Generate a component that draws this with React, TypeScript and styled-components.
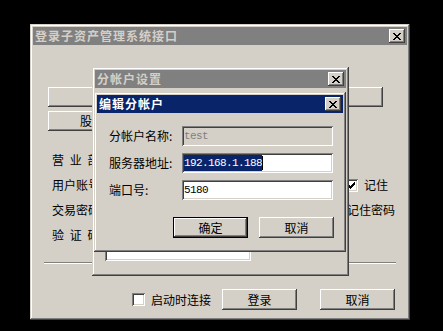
import React from 'react';
import styled, { createGlobalStyle } from 'styled-components';

const GlobalStyle = createGlobalStyle`
  html, body {
    margin: 0;
    padding: 0;
    background: #000;
  }
  body {
    font-family: "Noto Sans CJK SC", "Noto Sans", sans-serif;
    font-size: 12px;
    color: #000;
  }
`;

const FACE = '#d4d0c8';

const Desktop = styled.div`
  position: relative;
  width: 443px;
  height: 331px;
  background: #000;
  overflow: hidden;
`;

const Window = styled.div<{ $left: number; $top: number; $width: number; $height: number }>`
  position: absolute;
  left: ${p => p.$left}px;
  top: ${p => p.$top}px;
  width: ${p => p.$width}px;
  height: ${p => p.$height}px;
  box-sizing: border-box;
  padding: 3px;
  background: ${FACE};
  box-shadow: inset -1px -1px #404040, inset 1px 1px ${FACE}, inset -2px -2px #808080, inset 2px 2px #fff;
  display: flex;
  flex-direction: column;
`;

const TitleBar = styled.div<{ $active?: boolean }>`
  flex: none;
  height: 18px;
  display: flex;
  align-items: center;
  justify-content: space-between;
  padding: 0 2px;
  background: ${p => (p.$active ? '#0a246a' : '#808080')};
  color: ${p => (p.$active ? '#fff' : FACE)};
`;

const TitleText = styled.span`
  font-weight: bold;
  font-size: 12px;
  letter-spacing: 1px;
  line-height: 18px;
`;

const CloseButton = styled.div`
  width: 16px;
  height: 14px;
  box-sizing: border-box;
  display: flex;
  align-items: center;
  justify-content: center;
  background: ${FACE};
  box-shadow: inset -1px -1px #404040, inset 1px 1px #fff, inset -2px -2px #808080, inset 2px 2px ${FACE};
`;

const Body = styled.div`
  flex: 1;
  display: flex;
  flex-direction: column;
`;

const MainBody = styled(Body)`
  padding: 42px 11px 0 11px;
`;

const RaisedButton = styled.div<{ $width?: number; $height?: number; $default?: boolean }>`
  flex: none;
  width: ${p => (p.$width ? `${p.$width}px` : 'auto')};
  height: ${p => p.$height ?? 21}px;
  box-sizing: border-box;
  display: flex;
  align-items: center;
  justify-content: center;
  background: ${FACE};
  font-size: 12px;
  line-height: 1;
  border: ${p => (p.$default ? '1px solid #000' : 'none')};
  box-shadow: inset -1px -1px #404040, inset 1px 1px #fff, inset -2px -2px #808080, inset 2px 2px ${FACE};
`;

const WideButton = styled(RaisedButton)`
  margin: 0 13px 4px 4px;
`;

const TabButton = styled(RaisedButton)`
  margin-left: 4px;
`;

const Fields = styled.div`
  display: flex;
  flex-direction: column;
  gap: 5px;
  margin: 19px 0 0 8px;
`;

const FieldRow = styled.div`
  height: 20px;
  display: flex;
  align-items: center;
`;

const FieldLabel = styled.span`
  flex: none;
  width: 53px;
  white-space: pre;
  word-spacing: 3px;
  line-height: 14px;
`;

const Sunken = styled.div<{ $disabled?: boolean }>`
  height: 20px;
  box-sizing: border-box;
  display: flex;
  align-items: center;
  padding: 0 2px;
  background: ${p => (p.$disabled ? FACE : '#fff')};
  color: ${p => (p.$disabled ? '#808080' : '#000')};
  box-shadow: inset 1px 1px #808080, inset -1px -1px #fff, inset 2px 2px #404040, inset -2px -2px ${FACE};
  font-family: "Liberation Mono", monospace;
  font-size: 11px;
  letter-spacing: -0.6px;
`;

const FieldInput = styled(Sunken)<{ $width?: number }>`
  flex: ${p => (p.$width ? 'none' : '1')};
  width: ${p => (p.$width ? `${p.$width}px` : 'auto')};
  margin-right: 5px;
`;

const CheckGroup = styled.label<{ $width?: number }>`
  flex: none;
  width: ${p => (p.$width ? `${p.$width}px` : 'auto')};
  display: flex;
  align-items: center;
  gap: 6px;
  line-height: 14px;
`;

const CheckBox = styled.span`
  flex: none;
  width: 13px;
  height: 13px;
  box-sizing: border-box;
  display: flex;
  align-items: center;
  justify-content: center;
  background: #fff;
  box-shadow: inset 1px 1px #808080, inset -1px -1px #fff, inset 2px 2px #404040, inset -2px -2px ${FACE};
`;

const Separator = styled.div`
  height: 2px;
  margin-top: 17px;
  border-top: 1px solid #808080;
  border-bottom: 1px solid #fff;
  box-sizing: border-box;
`;

const ActionBar = styled.div`
  display: flex;
  justify-content: flex-end;
  align-items: center;
  margin: 25px 1px 0 0;
`;

const StartCheck = styled(CheckGroup)`
  margin-right: 11px;
`;

const ButtonGroup = styled.div<{ $gap: number }>`
  display: flex;
  gap: ${p => p.$gap}px;
`;

const MiddleBody = styled(Body)`
  justify-content: flex-end;
  padding: 0 0 12px 10px;
`;

const ListBox = styled(Sunken)`
  width: 146px;
  height: 40px;
`;

const DialogBody = styled(Body)`
  padding: 13px 9px 0 12px;
`;

const Form = styled.div`
  display: grid;
  grid-template-columns: 73px 151px;
  row-gap: 7px;
  align-items: center;
`;

const FormLabel = styled.span`
  line-height: 14px;
`;

const Selected = styled.span`
  background: #0a246a;
  color: #fff;
  padding: 1px 0;
  line-height: 14px;
`;

const Caret = styled.span`
  width: 1px;
  height: 14px;
  background: #000;
`;

const DialogButtons = styled(ButtonGroup)`
  justify-content: flex-end;
  margin-top: 17px;
`;

function CloseIcon() {
  return (
    <svg width="8" height="7" viewBox="0 0 8 7" shapeRendering="crispEdges">
      <path
        fill="#000"
        d="M0 0h2v1H0zM6 0h2v1H6zM1 1h2v1H1zM5 1h2v1H5zM2 2h4v1H2zM3 3h2v1H3zM2 4h4v1H2zM1 5h2v1H1zM5 5h2v1H5zM0 6h2v1H0zM6 6h2v1H6z"
      />
    </svg>
  );
}

function CheckMark() {
  return (
    <svg width="7" height="7" viewBox="0 0 7 7" shapeRendering="crispEdges">
      <path
        fill="#000"
        d="M6 0h1v1H6zM5 1h2v1H5zM0 2h1v1H0zM4 2h3v1H4zM0 3h2v1H0zM3 3h3v1H3zM0 4h5v1H0zM1 5h3v1H1zM2 6h1v1H2z"
      />
    </svg>
  );
}

function Title({ text, active }: { text: string; active?: boolean }) {
  return (
    <TitleBar $active={active}>
      <TitleText>{text}</TitleText>
      <CloseButton>
        <CloseIcon />
      </CloseButton>
    </TitleBar>
  );
}

export default function App() {
  return (
    <>
      <GlobalStyle />
      <Desktop>
        <Window $left={30} $top={24} $width={380} $height={296}>
          <Title text="登录子资产管理系统接口" />
          <MainBody>
            <WideButton $height={20}>期货</WideButton>
            <TabButton $width={88} $height={20}>股票</TabButton>
            <Fields>
              <FieldRow>
                <FieldLabel>营 业 部</FieldLabel>
                <FieldInput $width={200} />
              </FieldRow>
              <FieldRow>
                <FieldLabel>用户账号</FieldLabel>
                <FieldInput />
                <CheckGroup $width={51}>
                  <CheckBox>
                    <CheckMark />
                  </CheckBox>
                  记住
                </CheckGroup>
              </FieldRow>
              <FieldRow>
                <FieldLabel>交易密码</FieldLabel>
                <FieldInput />
                <CheckGroup $width={68}>
                  <CheckBox />
                  记住密码
                </CheckGroup>
              </FieldRow>
              <FieldRow>
                <FieldLabel>验 证 码</FieldLabel>
                <FieldInput $width={120} />
              </FieldRow>
            </Fields>
            <Separator />
            <ActionBar>
              <StartCheck>
                <CheckBox />
                启动时连接
              </StartCheck>
              <ButtonGroup $gap={23}>
                <RaisedButton $width={75}>登录</RaisedButton>
                <RaisedButton $width={75}>取消</RaisedButton>
              </ButtonGroup>
            </ActionBar>
          </MainBody>
        </Window>

        <Window $left={92} $top={67} $width={257} $height={209}>
          <Title text="分帐户设置" />
          <MiddleBody>
            <ListBox />
          </MiddleBody>
        </Window>

        <Window $left={94} $top={92} $width={252} $height={160}>
          <Title text="编辑分帐户" active />
          <DialogBody>
            <Form>
              <FormLabel>分帐户名称:</FormLabel>
              <Sunken $disabled>test</Sunken>
              <FormLabel>服务器地址:</FormLabel>
              <Sunken>
                <Selected>192.168.1.188</Selected>
                <Caret />
              </Sunken>
              <FormLabel>端口号:</FormLabel>
              <Sunken>5180</Sunken>
            </Form>
            <DialogButtons $gap={11}>
              <RaisedButton $width={75} $default>确定</RaisedButton>
              <RaisedButton $width={75}>取消</RaisedButton>
            </DialogButtons>
          </DialogBody>
        </Window>
      </Desktop>
    </>
  );
}
